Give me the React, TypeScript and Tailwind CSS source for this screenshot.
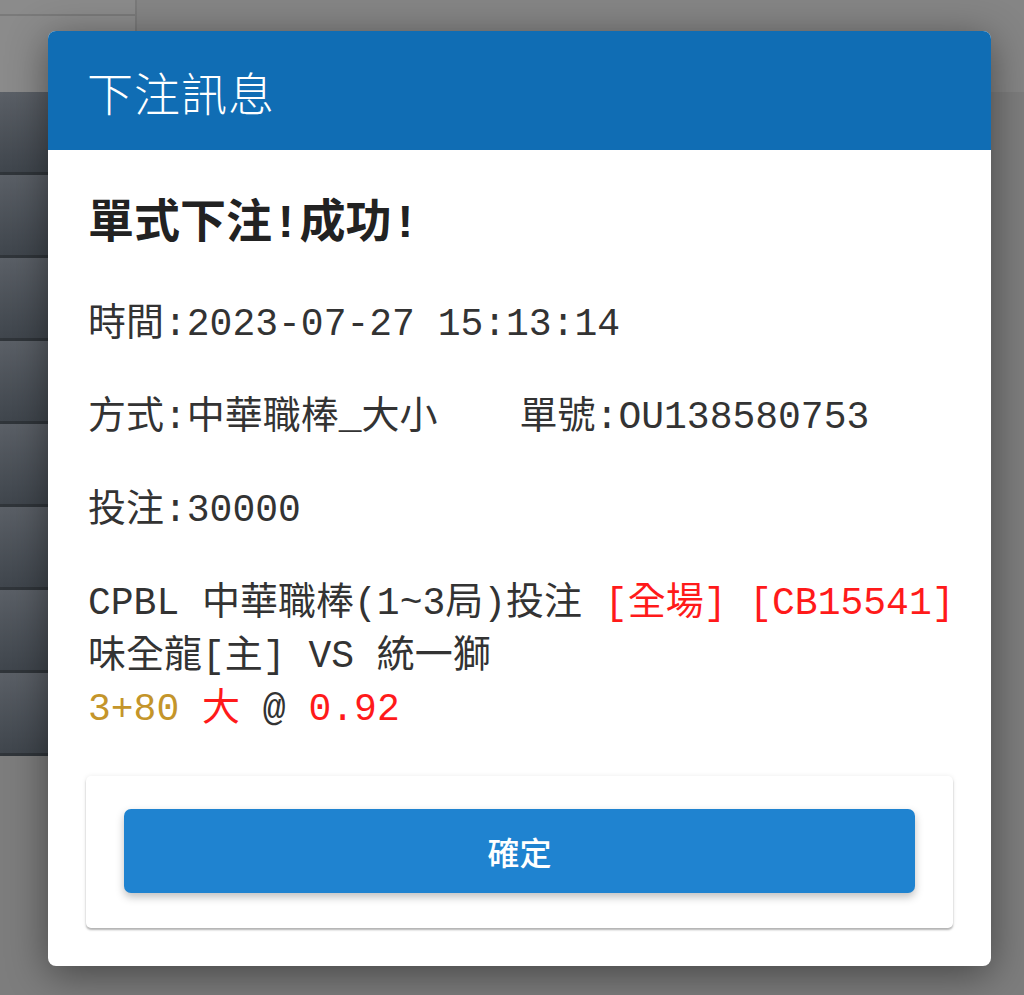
import React from "react";

const mono = "font-['Liberation_Mono','Noto_Sans_CJK_TC',monospace]";

export default function App() {
  const rows = [0, 1, 2, 3, 4, 5, 6, 7];
  return (
    <div className="relative w-[1024px] h-[995px] overflow-hidden bg-[#7d7d7d]">
      {/* dimmed page behind */}
      <div className="flex flex-col">
        <div className="flex h-[92px] bg-[#8b8b8b]">
          <div className="w-[137px] flex flex-col border-r-2 border-[#7a7a7a]">
            <div className="h-[16px] border-b-2 border-[#7a7a7a]" />
            <div className="flex-1" />
          </div>
          <div className="flex-1 bg-[#858585]" />
        </div>
        <div className="flex flex-col w-[60px]">
          {rows.map((r) => (
            <div
              key={r}
              className="h-[83px] bg-gradient-to-b from-[#5b6067] to-[#40464d] border-b-[3px] border-[#30353a]"
            />
          ))}
        </div>
      </div>

      {/* dialog overlay */}
      <div className="absolute left-[48px] top-[31px] w-[943px] h-[935px] rounded-[8px] bg-white overflow-hidden shadow-[0_8px_40px_rgba(0,0,0,0.45)] flex flex-col">
        <div className="h-[119px] shrink-0 bg-[#106db4] flex items-center pl-[39px]">
          <span className="text-white text-[46px] leading-none font-['Noto_Sans_CJK_TC',sans-serif] font-light tracking-[1px]">
            下注訊息
          </span>
        </div>
        <div className="flex-1 flex flex-col px-[38px] pt-[48px] pb-[38px]">
          <div className={`${mono} text-[46px] leading-[55px] font-semibold text-[#222] pl-[2px]`}>
            單式下注!成功!
          </div>
          <div className={`${mono} text-[38px] leading-[53px] text-[#333] pl-[2px] mt-[45px] flex flex-col gap-[40px]`}>
            <div>時間:2023-07-27 15:13:14</div>
            <div className="flex">
              <span>方式:中華職棒_大小</span>
              <span className="ml-[82px]">單號:OU138580753</span>
            </div>
            <div>投注:30000</div>
            <div className="flex flex-col">
              <div className="whitespace-nowrap">
                CPBL 中華職棒(1~3局)投注 <span className="text-[#ff1a1a]">[全場]</span>{" "}
                <span className="text-[#ff1a1a]">[CB15541]</span>
              </div>
              <div className="whitespace-pre">味全龍[主] VS 統一獅</div>
              <div className="whitespace-pre">
                <span className="text-[#c4952a]">3+80</span> <span className="text-[#ff1a1a]">大</span> @{" "}
                <span className="text-[#ff1a1a]">0.92</span>
              </div>
            </div>
          </div>
          <div className="mt-[40px] rounded-[5px] bg-white px-[38px] pt-[33px] pb-[35px] shadow-[0_2px_2px_rgba(0,0,0,0.28),0_0_5px_rgba(0,0,0,0.08)]">
            <button className="w-full h-[84px] rounded-[7px] bg-[#1f83d0] text-white text-[32px] font-medium font-['Noto_Sans_CJK_TC',sans-serif] shadow-[0_4px_8px_rgba(0,0,0,0.25)] flex items-center justify-center">
              確定
            </button>
          </div>
        </div>
      </div>
    </div>
  );
}
